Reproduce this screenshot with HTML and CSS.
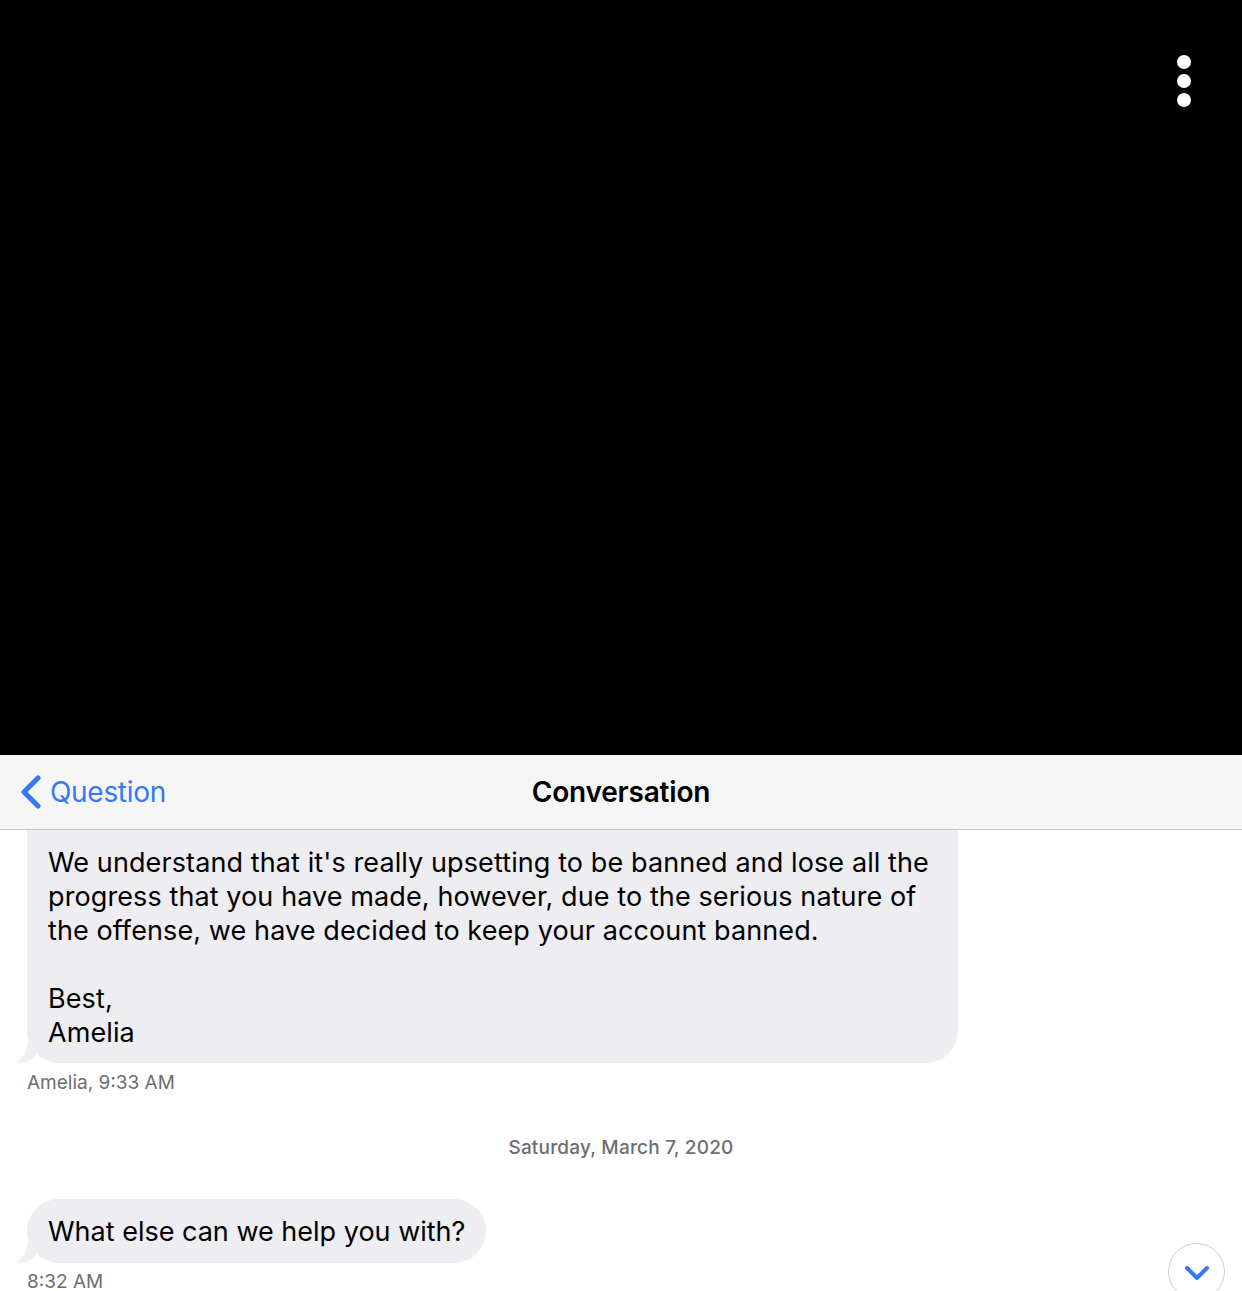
FILE: index.html
```html
<!DOCTYPE html>
<html lang="en">
<head>
    <meta charset="UTF-8">
    <meta name="viewport" content="width=device-width, initial-scale=1.0">
    <title>Conversation</title>
    <link rel="stylesheet" href="styles.css">
</head>
<body>
    <div class="screen">
        <div class="video-area">
            <div class="menu-dots">
                <span></span>
                <span></span>
                <span></span>
            </div>
        </div>

        <header class="nav-bar">
            <a class="back-link" href="#">
                <svg class="back-icon" width="22" height="34" viewBox="0 0 22 34">
                    <path d="M18 3 L4 17 L18 31" fill="none" stroke="currentColor" stroke-width="5" stroke-linecap="round" stroke-linejoin="round"/>
                </svg>
                <span>Question</span>
            </a>
            <h1 class="nav-title">Conversation</h1>
        </header>

        <main class="chat">
            <div class="bubble bubble-first">
                <p class="bubble-text">We understand that it's really upsetting to be banned and lose all the<br>progress that you have made, however, due to the serious nature of<br>the offense, we have decided to keep your account banned.<br><br>Best,<br>Amelia</p>
                <svg class="tail" width="20" height="22" viewBox="0 0 20 22">
                    <path d="M12 0 C12 10 7 17 0 22 C8 22 15 20 20 15 L20 0 Z" fill="#ededf2"/>
                </svg>
            </div>
            <div class="meta">Amelia, 9:33 AM</div>

            <div class="date-sep">Saturday, March 7, 2020</div>

            <div class="bubble bubble-short">
                <p class="bubble-text">What else can we help you with?</p>
                <svg class="tail" width="20" height="22" viewBox="0 0 20 22">
                    <path d="M12 0 C12 10 7 17 0 22 C8 22 15 20 20 15 L20 0 Z" fill="#ededf2"/>
                </svg>
            </div>
            <div class="meta">8:32 AM</div>
        </main>

        <button class="scroll-down">
            <svg width="26" height="16" viewBox="0 0 26 16">
                <path d="M3 3 L13 13 L23 3" fill="none" stroke="#3478f6" stroke-width="4" stroke-linecap="round" stroke-linejoin="round"/>
            </svg>
        </button>
    </div>
</body>
</html>
```

FILE: styles.css
```css
:root {
    --blue: #3478f6;
    --bubble-bg: #ededf2;
    --nav-bg: #f6f6f7;
    --nav-border: #c8c8cc;
    --meta-color: #6d6d72;
}

* {
    margin: 0;
    padding: 0;
    box-sizing: border-box;
}

body {
    background: #ffffff;
    font-family: Inter, "Liberation Sans", sans-serif;
    color: #000000;
}

.screen {
    position: relative;
    width: 1242px;
    height: 1291px;
    overflow: hidden;
    display: flex;
    flex-direction: column;
}

/* Video / black area */
.video-area {
    height: 755px;
    background: #000000;
    display: flex;
    justify-content: flex-end;
    padding: 55px 51px 0 0;
    flex-shrink: 0;
}

.menu-dots {
    display: flex;
    flex-direction: column;
    gap: 5px;
}

.menu-dots span {
    width: 14px;
    height: 14px;
    border-radius: 50%;
    background: #ffffff;
}

/* Nav bar */
.nav-bar {
    position: relative;
    z-index: 2;
    height: 75px;
    background: var(--nav-bg);
    border-bottom: 1px solid var(--nav-border);
    display: flex;
    align-items: center;
    justify-content: center;
    flex-shrink: 0;
}

.back-link {
    position: absolute;
    left: 20px;
    top: 20px;
    display: flex;
    align-items: center;
    gap: 8px;
    color: var(--blue);
    text-decoration: none;
    font-size: 28px;
    letter-spacing: -0.3px;
}

.nav-title {
    font-size: 28px;
    font-weight: 600;
    letter-spacing: -0.2px;
}

/* Chat */
.chat {
    position: relative;
    z-index: 1;
    flex: 1;
    display: flex;
    flex-direction: column;
    align-items: flex-start;
    padding: 0 27px;
}

.bubble {
    position: relative;
    background: var(--bubble-bg);
    border-radius: 32px;
    padding: 15px 21px;
}

.bubble-first {
    width: 931px;
    margin-top: -40px;
    padding-top: 56px;
    padding-bottom: 13px;
}

.bubble-text {
    font-size: 27px;
    line-height: 34px;
    letter-spacing: 0.1px;
    white-space: nowrap;
}

.bubble-short .bubble-text {
    letter-spacing: 0;
    position: relative;
    top: 1px;
}

.tail {
    position: absolute;
    left: -11px;
    bottom: 0;
}

.meta {
    font-size: 19px;
    line-height: 23px;
    color: var(--meta-color);
    margin-top: 8px;
}

.date-sep {
    align-self: center;
    font-size: 19px;
    line-height: 23px;
    font-weight: 500;
    letter-spacing: 0.2px;
    color: var(--meta-color);
    margin-top: 42px;
    margin-bottom: 40px;
}

.bubble-short + .meta {
    margin-top: 7px;
}

/* Scroll-to-bottom button */
.scroll-down {
    position: absolute;
    left: 1168px;
    top: 1243px;
    width: 57px;
    height: 57px;
    border-radius: 50%;
    background: #ffffff;
    border: 1px solid #cfcfd3;
    display: flex;
    align-items: center;
    justify-content: center;
    padding-top: 2px;
    z-index: 3;
}
```
